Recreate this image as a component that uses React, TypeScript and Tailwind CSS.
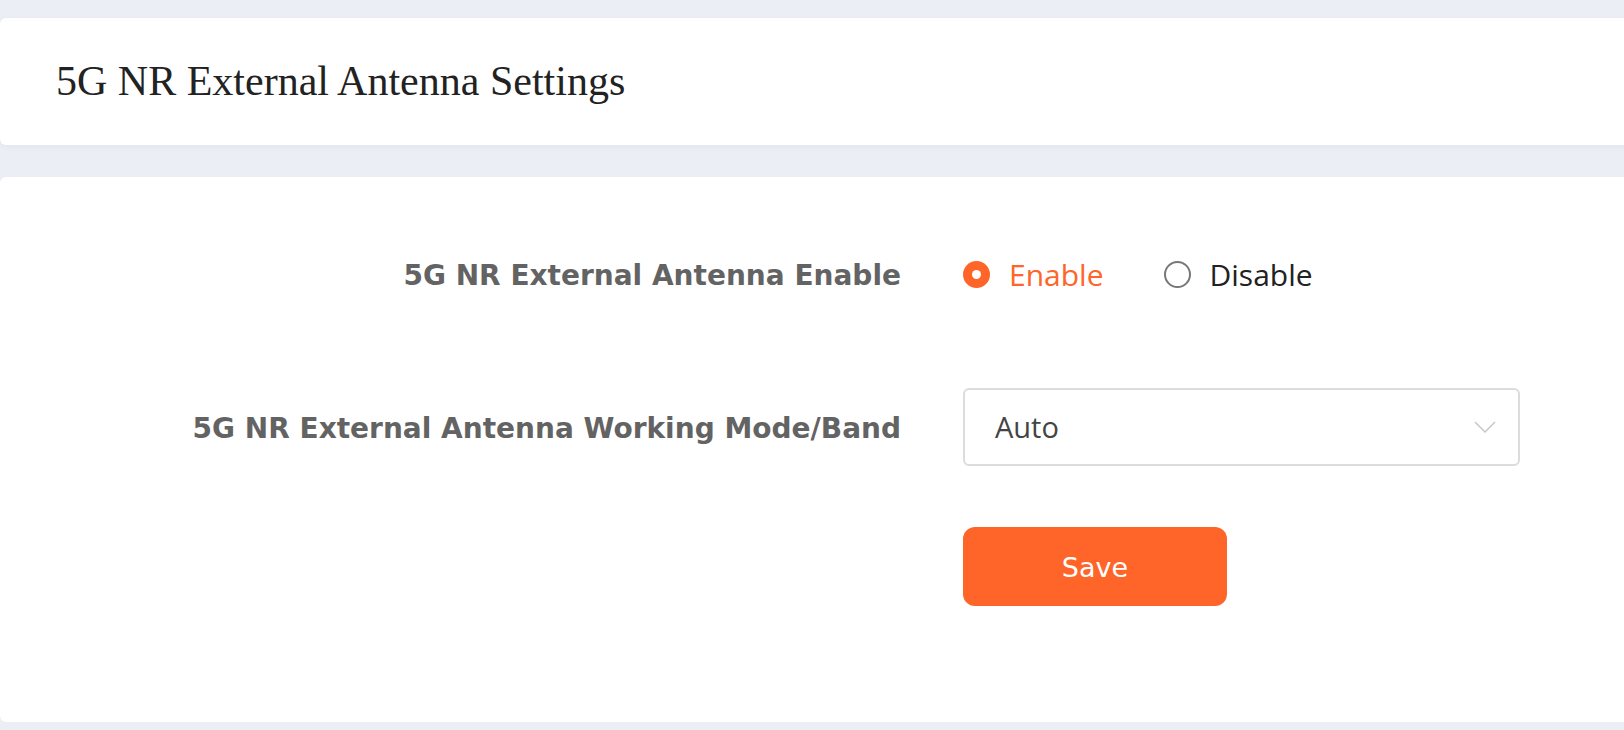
import { useState } from "react";

const baseFont = { fontFamily: '"Open Sans", "DejaVu Sans", sans-serif' };
const labelFont = { fontFamily: '"DejaVu Sans", Verdana, sans-serif' };

function Radio({ checked, label, onSelect }: { checked: boolean; label: string; onSelect: () => void }) {
  return (
    <button className="flex items-center gap-[19px]" type="button" onClick={onSelect}>
      {checked ? (
        <span className="flex size-[27px] items-center justify-center rounded-full bg-[#ff6428]">
          <span className="size-[9px] rounded-full bg-white" />
        </span>
      ) : (
        <span className="size-[27px] rounded-full border-2 border-[#777777] bg-white" />
      )}
      <span className={checked ? "text-[30px] text-[#ff6428]" : "text-[30px] text-[#222222]"}>{label}</span>
    </button>
  );
}

export default function App() {
  const [enabled, setEnabled] = useState(true);

  return (
    <div className="min-h-[730px] overflow-hidden bg-[#ebeef5] pt-[18px]" style={baseFont}>
      <div className="mr-[-20px] flex h-[127px] items-center rounded-l-[6px] bg-white pl-[56px] shadow-[0_2px_6px_rgba(0,0,0,0.04)]">
        <h1 className="text-[42px] text-[#222222]" style={{ fontFamily: '"Liberation Serif", "Times New Roman", serif' }}>
          5G NR External Antenna Settings
        </h1>
      </div>

      <div className="mr-[-20px] mt-[32px] h-[545px] rounded-l-[6px] bg-white pt-[58px]">
        <div className="flex h-[78px] items-center">
          <div className="w-[901px] pt-[4px] text-right text-[28px] font-bold text-[#636363]" style={labelFont}>
            5G NR External Antenna Enable
          </div>
          <div className="ml-[62px] flex items-center gap-[60px]">
            <Radio checked={enabled} label="Enable" onSelect={() => setEnabled(true)} />
            <Radio checked={!enabled} label="Disable" onSelect={() => setEnabled(false)} />
          </div>
        </div>

        <div className="mt-[75px] flex h-[78px] items-center">
          <div className="w-[901px] pt-[4px] text-right text-[28px] font-bold text-[#636363]" style={labelFont}>
            5G NR External Antenna Working Mode/Band
          </div>
          <div className="ml-[62px] flex h-full w-[557px] items-center justify-between rounded-[6px] border-2 border-[#dcdcdc] pl-[30px] pr-[22px]">
            <span className="text-[29px] text-[#444444]">Auto</span>
            <svg width="22" height="12" viewBox="0 0 22 12" fill="none">
              <path d="M1 1l10 10L21 1" stroke="#c8c8c8" strokeWidth="1.5" />
            </svg>
          </div>
        </div>

        <div className="mt-[61px] pl-[963px]">
          <button className="h-[79px] w-[264px] rounded-[12px] bg-[#ff6428] pt-[4px] text-[27px] text-white" style={labelFont} type="button">
            Save
          </button>
        </div>
      </div>
    </div>
  );
}
